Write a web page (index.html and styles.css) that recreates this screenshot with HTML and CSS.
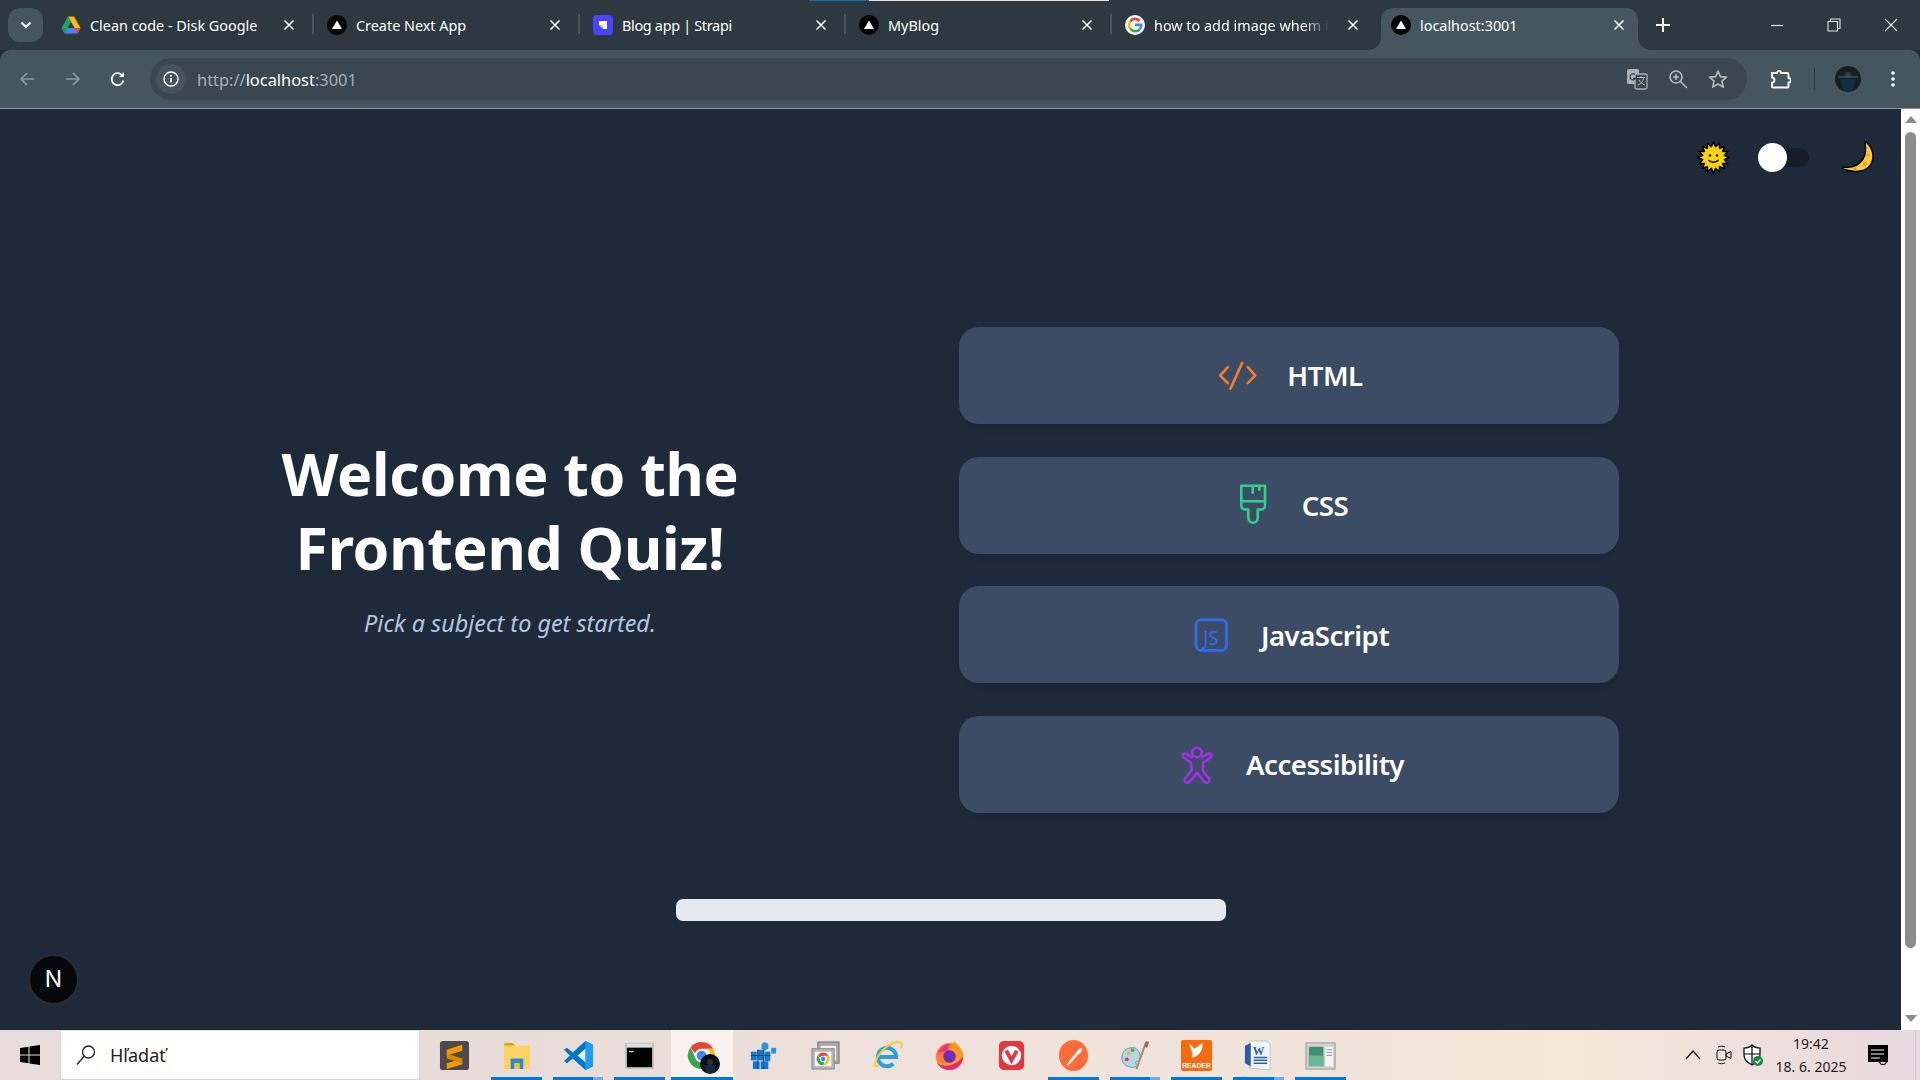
FILE: index.html
```html
<!DOCTYPE html>
<html lang="en">
<head>
<meta charset="utf-8">
<title>localhost:3001</title>
<link rel="stylesheet" href="styles.css">
</head>
<body>
<svg class="defs" width="0" height="0">
  <defs>
    <symbol id="next" viewBox="0 0 20 20"><circle cx="10" cy="10" r="10" fill="#000"/><path d="M10 5.500 15 14H5z" fill="#fff"/></symbol>
    <symbol id="x" viewBox="0 0 12 12"><path d="M1.500 1.500l9 9M10.500 1.500l-9 9" stroke="#fff" stroke-width="1.600" fill="none"/></symbol>
    <symbol id="chromelogo" viewBox="0 0 32 32">
      <path d="M16 2a14 14 0 0 1 12.100 7H16a7 7 0 0 0-6.700 5L4.700 7.700A14 14 0 0 1 16 2z" fill="#ea4335"/>
      <path d="M28.100 9A14 14 0 0 1 17 30l5.700-10A7 7 0 0 0 22 9z" fill="#fbbc04"/>
      <path d="M4.700 7.700 10.400 20a7 7 0 0 0 8 2.700L17 30A14 14 0 0 1 4.700 7.700z" fill="#34a853"/>
      <circle cx="16" cy="16" r="6.500" fill="#fff"/><circle cx="16" cy="16" r="5" fill="#4285f4"/>
    </symbol>
  </defs>
</svg>

<header class="tabstrip">
  <div class="tabs-btn"><svg width="12" height="8" viewBox="0 0 12 8"><path d="M1.500 1.500 6 6l4.500-4.500" stroke="#fff" stroke-width="2" fill="none"/></svg></div>
  <div class="tab">
    <svg class="favicon" viewBox="0 0 20 20"><path d="M7 1.500h6L19.500 13h-6z" fill="#fbbc04"/><path d="M7 1.500 .5 13l3 5.500L10 7z" fill="#1fa463"/><path d="M3.500 18.500 6.500 13h13l-3 5.500z" fill="#4285f4"/><path d="M3.500 18.500 6.500 13H.5z" fill="#0f9d58"/><path d="M16.500 18.500 19.500 13h-6z" fill="#ea4335"/></svg>
    <span class="tab-title">Clean code - Disk Google</span>
    <svg class="tab-x"><use href="#x"/></svg><i class="tab-sep"></i>
  </div>
  <div class="tab">
    <svg class="favicon"><use href="#next"/></svg>
    <span class="tab-title">Create Next App</span>
    <svg class="tab-x"><use href="#x"/></svg><i class="tab-sep"></i>
  </div>
  <div class="tab">
    <svg class="favicon" viewBox="0 0 20 20"><rect width="20" height="20" rx="4" fill="#4945ff"/><path d="M6 6h8v8h-4v-4H6z" fill="#fff"/><path d="M6 10h4v4z" fill="#c9c8ff"/></svg>
    <span class="tab-title tab-tight">Blog app | Strapi</span>
    <svg class="tab-x"><use href="#x"/></svg><i class="tab-sep"></i>
  </div>
  <div class="tab">
    <svg class="favicon"><use href="#next"/></svg>
    <span class="tab-title">MyBlog</span>
    <svg class="tab-x"><use href="#x"/></svg><i class="tab-sep"></i>
  </div>
  <div class="tab">
    <svg class="favicon" viewBox="0 0 20 20"><circle cx="10" cy="10" r="10" fill="#fff"/><g fill="none" stroke-width="2.600"><path d="M14.700 5.800A6.200 6.200 0 0 0 5.200 6.400" stroke="#ea4335"/><path d="M5.200 6.400a6.200 6.200 0 0 0 0 7.200" stroke="#fbbc04"/><path d="M5.200 13.600a6.200 6.200 0 0 0 9.800.5" stroke="#34a853"/><path d="M15 14.100a6.200 6.200 0 0 0 1.200-4.200H10" stroke="#4285f4"/></g></svg>
    <span class="tab-title tab-fade">how to add image whem it is in</span>
    <svg class="tab-x"><use href="#x"/></svg>
  </div>
  <div class="tab tab-active">
    <svg class="favicon"><use href="#next"/></svg>
    <span class="tab-title">localhost:3001</span>
    <svg class="tab-x"><use href="#x"/></svg>
  </div>
  <svg class="newtab" width="14" height="14" viewBox="0 0 14 14"><path d="M7 0v14M0 7h14" stroke="#fff" stroke-width="2"/></svg>
  <div class="winctl">
    <svg width="14" height="14" viewBox="0 0 14 14"><path d="M1 7.500h12" stroke="#dfe3e6" stroke-width="1.200"/></svg>
    <svg width="14" height="14" viewBox="0 0 14 14"><path d="M1 3.500h9.500V13H1zM3.500 3.500V1H13v9.500h-2.500" stroke="#dfe3e6" stroke-width="1.100" fill="none"/></svg>
    <svg width="14" height="14" viewBox="0 0 14 14"><path d="M1 1l12 12M13 1 1 13" stroke="#dfe3e6" stroke-width="1.100"/></svg>
  </div>
  <div class="loadline"><i class="load-blue"></i><i class="load-gray"></i></div>
</header>

<nav class="toolbar">
  <div class="navbtns">
    <svg width="16" height="16" viewBox="0 0 16 16"><path d="M15 8H2M8 2 2 8l6 6" stroke="#8d999f" stroke-width="1.700" fill="none"/></svg>
    <svg width="16" height="16" viewBox="0 0 16 16"><path d="M1 8h13M8 2l6 6-6 6" stroke="#8d999f" stroke-width="1.700" fill="none"/></svg>
    <svg width="16" height="16" viewBox="0 0 16 16"><path d="M13.500 9.500A6 6 0 1 1 12 4" stroke="#fff" stroke-width="1.800" fill="none"/><path d="M14 1v5H9z" fill="#fff"/></svg>
  </div>
  <div class="omnibox">
    <div class="info-chip"><svg width="16" height="16" viewBox="0 0 16 16"><circle cx="8" cy="8" r="7" stroke="#fff" stroke-width="1.400" fill="none"/><path d="M8 7v4.500" stroke="#fff" stroke-width="1.600"/><circle cx="8" cy="4.800" r="1" fill="#fff"/></svg></div>
    <div class="url"><span class="url-dim">http://</span><span>localhost</span><span class="url-dim">:3001</span></div>
    <div class="omni-icons">
      <svg width="22" height="22" viewBox="0 0 22 22"><rect x="1" y="1" width="12" height="15" rx="1.500" fill="#aab2b6"/><rect x="9" y="6" width="12" height="15" rx="1.500" fill="#3b4750" stroke="#aab2b6" stroke-width="1.300"/><path d="M11 9.500h8M15 8v2M12 17c3-1 5-3 5.500-7M13 12c1 2 3 4 6 5" stroke="#aab2b6" stroke-width="1" fill="none"/><path d="M9 6.500A3 3 0 1 0 9.500 10.500H7" stroke="#3b4750" stroke-width="1.300" fill="none"/></svg>
      <svg width="20" height="20" viewBox="0 0 20 20"><circle cx="8" cy="8" r="6" stroke="#b4bbbf" stroke-width="1.600" fill="none"/><path d="M12.500 12.500 19 19M5 8h6M8 5v6" stroke="#b4bbbf" stroke-width="1.600"/></svg>
      <svg width="20" height="20" viewBox="0 0 20 20"><path d="M10 2l2.400 5.600 6.100.5-4.600 4 1.400 6L10 15l-5.300 3.100 1.400-6-4.600-4 6.100-.5z" stroke="#b4bbbf" stroke-width="1.600" fill="none" stroke-linejoin="round"/></svg>
    </div>
  </div>
  <svg class="ext" width="20" height="20" viewBox="0 0 20 20"><path d="M1 4h5a2 2 0 0 1 4 0h6a1.500 1.500 0 0 1 1.500 1.500V9a2.300 2.300 0 0 1 0 4.600v3.900a1 1 0 0 1-1 1H2a1 1 0 0 1-1-1v-3.900a2.500 2.500 0 0 0 0-5z" stroke="#fff" stroke-width="1.800" fill="none"/></svg>
  <i class="tool-div"></i>
  <svg class="avatar" width="26" height="26" viewBox="0 0 26 26"><circle cx="13" cy="13" r="13" fill="#171f20"/><circle cx="13" cy="9" r="3" fill="#3a3a34"/><path d="M6 13h14l-2 12H8z" fill="#10304a"/><path d="M3 11h20" stroke="#2c6a80" stroke-width="1"/></svg>
  <svg class="dots" width="4" height="16" viewBox="0 0 4 16"><circle cx="2" cy="2" r="1.800" fill="#fff"/><circle cx="2" cy="8" r="1.800" fill="#fff"/><circle cx="2" cy="14" r="1.800" fill="#fff"/></svg>
</nav>

<div class="viewport">
  <main class="page">
    <div class="theme-row">
      <svg class="sun" width="33" height="33" viewBox="0 0 33 33">
        <path d="M32 16.500 27.300 18.600 30.800 22.400 25.600 22.600 27.500 27.500 22.600 25.600 22.400 30.800 18.600 27.300 16.500 32 14.400 27.300 10.600 30.800 10.400 25.600 5.500 27.500 7.400 22.600 2.200 22.400 5.700 18.600 1 16.500 5.700 14.400 2.200 10.600 7.400 10.400 5.500 5.500 10.400 7.400 10.600 2.200 14.400 5.700 16.500 1 18.600 5.700 22.400 2.200 22.600 7.400 27.500 5.500 25.600 10.400 30.800 10.600 27.300 14.400z" fill="#ffd400" stroke="#000" stroke-width="1.500" stroke-linejoin="round"/>
        <circle cx="13" cy="14.500" r="1.200" fill="#000"/><circle cx="20" cy="14.500" r="1.200" fill="#000"/><path d="M11.500 19c2.500 3 7.500 3 10 0" stroke="#000" stroke-width="1.300" fill="none"/>
      </svg>
      <div class="toggle"><i class="toggle-knob"></i></div>
      <svg class="moon" width="34" height="33" viewBox="0 0 34 33"><path d="M25 1c7 6 9 15 5 22S16 33 2 28c-1-1 0-2 1-2 8 1 15-2 19-8 3-5 3-11 2-16 0-1 .5-1.500 1-1z" fill="#ffc83d" stroke="#000" stroke-width="1.500" stroke-linejoin="round"/><circle cx="27" cy="14" r="1.500" fill="#e0a020"/><circle cx="24" cy="23" r="2" fill="#e0a020"/><circle cx="14" cy="28" r="1.500" fill="#e0a020"/></svg>
    </div>

    <section class="hero">
      <div class="intro">
        <h1 class="title">Welcome to the<br>Frontend Quiz!</h1>
        <p class="subtitle">Pick a subject to get started.</p>
      </div>
      <div class="subjects">
        <button class="subject">
          <svg class="subject-icon stroke-orange" viewBox="0 0 56 56"><path d="M8.800 19.200 1.200 27.500l7.600 7.700M23.200 14.800 11.500 40.800M28.800 19.200l7.400 8.300-7.400 7.700"/></svg>
          <span>HTML</span>
        </button>
        <button class="subject">
          <svg class="subject-icon stroke-green" viewBox="0 0 56 56"><path d="M7.300 8.800H31V28.500a4 4 0 0 1-4 4H23.700V41a4.700 4.700 0 0 1-9.400 0V32.500H11.300a4 4 0 0 1-4-4zM7.300 24.200H31M18.700 8.800v7M25.300 8.800v4"/></svg>
          <span>CSS</span>
        </button>
        <button class="subject">
          <svg class="subject-icon stroke-blue" viewBox="0 0 56 56"><rect x="3" y="12.900" width="30.500" height="30.500" rx="5"/><text class="js-text" x="18" y="38" text-anchor="middle">JS</text></svg>
          <span>JavaScript</span>
        </button>
        <button class="subject">
          <svg class="subject-icon stroke-purple" viewBox="0 0 56 56"><circle cx="19" cy="15.500" r="4.700"/><path d="M13.700 20.200 8.500 16.800a2.300 2.300 0 0 0-2.600 3.800L12.700 25.500 13.700 33.500 7 41.500a2.800 2.800 0 0 0 5 3L19 35.500l7 9a2.800 2.800 0 0 0 5-3L24.700 33.500 25.300 25.500 32.500 20.600a2.300 2.300 0 0 0-2.600-3.800L24 20.200"/></svg>
          <span>Accessibility</span>
        </button>
      </div>
    </section>

    <div class="bar"></div>
    <div class="next-badge"><span>N</span></div>
  </main>
  <aside class="scrollbar">
    <i class="arrow-up"></i>
    <i class="thumb"></i>
    <i class="arrow-down"></i>
  </aside>
</div>

<footer class="taskbar">
  <div class="start"><svg width="20" height="20" viewBox="0 0 20 20"><path d="M0 3l8.500-1.200V9.500H0zM9.500 1.600 20 0v9.500H9.500zM0 10.500h8.500v7.700L0 17zM9.500 10.500H20V20L9.500 18.400z" fill="#000"/></svg></div>
  <div class="search">
    <svg width="20" height="22" viewBox="0 0 20 22"><circle cx="12.500" cy="8" r="6" stroke="#222" stroke-width="1.300" fill="none"/><path d="M8 12.500 1 20.500" stroke="#222" stroke-width="1.300"/></svg>
    <span>Hľadať</span>
  </div>
  <div class="apps">
    <div class="app"><svg viewBox="0 0 32 32"><rect x="1" y="1" width="30" height="30" rx="3" fill="#4b4b4b"/><path d="M24 6 8 11v6l16-5zM24 20v6L8 31v-6z" fill="#ff9800" transform="translate(0 -1)"/><path d="M8 15l16 5v5L8 20z" fill="#e08600" transform="translate(0 -1)"/></svg></div>
    <div class="app on"><svg viewBox="0 0 32 32"><path d="M3 5a2 2 0 0 1 2-2h7l3 3h-12z" fill="#e8a200"/><rect x="3" y="6" width="27" height="24" fill="#fcd462"/><path d="M10 30V19h13v11h-4v-6h-5v6z" fill="#2a8ad4"/><rect x="14" y="24" width="5" height="6" fill="#f5c033"/></svg></div>
    <div class="app on split"><svg viewBox="0 0 32 32"><path d="M23 1 31 5v22l-8 4L10 19l-6 5-3-2 6-6-6-6 3-2 6 5z" fill="#0078c8"/><path d="M23 1 31 5v22l-8 4z" fill="#1f9cf0"/><path d="M23 9 15 16l8 7z" fill="#fff" fill-opacity=".9"/></svg></div>
    <div class="app on"><svg viewBox="0 0 32 32"><rect x="1" y="3" width="30" height="27" fill="#bfc3c4"/><rect x="3" y="8" width="26" height="20" fill="#000"/><path d="M5 12h5" stroke="#fff" stroke-width="1"/><rect x="3" y="4" width="26" height="3" fill="#dfe1e2"/></svg></div>
    <div class="app on active">
      <div class="chrome-stack">
        <svg viewBox="0 0 32 32"><use href="#chromelogo"/></svg>
        <svg class="chrome-badge" viewBox="0 0 20 20"><circle cx="10" cy="10" r="10" fill="#0b0d10"/><circle cx="10" cy="8" r="3" fill="#33302c"/><path d="M4 11h12l-2 8H6z" fill="#12293c"/></svg>
      </div>
    </div>
    <div class="app"><svg viewBox="0 0 32 32"><g fill="#1679c9"><path d="M17 2l4 2v5l-4 2-3-2V4z" fill="#2b93dd"/><rect x="3" y="12" width="6" height="9"/><rect x="10" y="10" width="6" height="11"/><rect x="17" y="12" width="6" height="10"/><rect x="24" y="8" width="5" height="6" fill="#2b93dd"/><rect x="5" y="22" width="7" height="8"/><rect x="13" y="22" width="8" height="8"/></g><path d="M3 16h20M10 10v20M16 10v20" stroke="#0a4d85" stroke-width="1"/></svg></div>
    <div class="app"><svg viewBox="0 0 32 32"><rect x="8" y="2" width="22" height="22" fill="#a8a8a8" stroke="#777"/><rect x="11" y="6" width="16" height="15" fill="#f0f0f0"/><rect x="2" y="9" width="23" height="21" fill="#b5b5b5" stroke="#888"/><rect x="5" y="12" width="17" height="15" fill="#f4f4f4"/><svg x="6" y="12" width="15" height="15" viewBox="0 0 32 32"><use href="#chromelogo"/></svg></svg></div>
    <div class="app"><svg viewBox="0 0 32 32"><path d="M7 17.500h18a9.500 9.500 0 1 0-3 7" stroke="#2e9ddb" stroke-width="4" fill="none"/><path d="M7 26C2 30 2 25 5 19 9 10 20 2 27 2c4 0 4 3 3 6" stroke="#f5cf2e" stroke-width="2" fill="none"/></svg></div>
    <div class="app"><svg viewBox="0 0 32 32"><circle cx="16" cy="17" r="14" fill="#ff7a2e"/><path d="M21 1c3 4 9 8 9 16a14 14 0 0 1-14 14c-6 0-12-4-13-10 3 3 8 4 12 2-4 0-7-3-6-6 1-4 5-4 6-6z" fill="#ff9a1f"/><path d="M4 13c3-6 8-9 13-9-3 3-3 5-2 7z" fill="#e6317f"/><circle cx="16" cy="17" r="6.500" fill="#6f2bc0"/><path d="M30 17a14 14 0 0 1-14 14c-6 0-11-3-13-8 6 6 18 5 27-6z" fill="#e32b77"/></svg></div>
    <div class="app"><svg viewBox="0 0 32 32"><rect x="3" y="1" width="26" height="30" rx="5" fill="#e5373f"/><circle cx="16" cy="16" r="10" fill="#fff"/><path d="M10.500 11 16 21l5.500-10" stroke="#e5373f" stroke-width="4" fill="none"/></svg></div>
    <div class="app on"><svg viewBox="0 0 32 32"><ellipse cx="16" cy="16" rx="15" ry="16" fill="#ff6c37"/><path d="M10 24 17 15l5-6 3-1-1 4-5 5-7 8z" fill="#fff"/><path d="M9 25l2 1" stroke="#fff" stroke-width="1.500"/></svg></div>
    <div class="app on split"><svg viewBox="0 0 32 32"><path d="M15 8C7 7 1 12 2 20c1 6 7 9 13 8 3-1 2-3 1-5 3-1 6-3 5-7-1-4-3-7-6-8z" fill="#b4d6ea" stroke="#6d96b0"/><circle cx="9" cy="14" r="2" fill="#e8b43a"/><circle cx="13" cy="10.500" r="2" fill="#56a84c"/><circle cx="7" cy="20" r="2" fill="#d1473e"/><path d="M27 2 17 30" stroke="#b08a5a" stroke-width="2"/><path d="M27 1l3 1-2 6-3-1z" fill="#8d6e46"/></svg></div>
    <div class="app on"><svg viewBox="0 0 32 32"><rect x="0" y="0" width="32" height="32" rx="2" fill="#f96a0e"/><path d="M8 3l6 6 8-6c1 5-1 9-4 12-2 2-4 3-7 3l1-4z" fill="#fff"/><text class="reader-text" x="16" y="28.500" text-anchor="middle">READER</text></svg></div>
    <div class="app on split"><svg viewBox="0 0 32 32"><path d="M7 1h18l3 3v27l-21-2z" fill="#f2f4f7" stroke="#bcc4ce"/><path d="M2 6l6-3v24l-6-3z" fill="#2a5caa"/><text class="word-text" x="10" y="15">W</text><path d="M11 18h14M11 21h14M11 24h14" stroke="#2a5caa" stroke-width="1.600"/></svg></div>
    <div class="app on"><svg viewBox="0 0 32 32"><rect x="1" y="3" width="30" height="27" fill="#cfd3d3" stroke="#999"/><rect x="4" y="7" width="15" height="20" fill="#3f8f76"/><path d="M4 16h15v11H4z" fill="#6ab79b"/><rect x="21" y="7" width="8" height="20" fill="#f4f4f4"/><path d="M22 10h6M22 13h6M22 16h6" stroke="#9a9a9a"/></svg></div>
  </div>
  <div class="tray">
    <svg class="tray-chevron" width="16" height="10" viewBox="0 0 16 10"><path d="M1 9l7-8 7 8" stroke="#111" stroke-width="1.200" fill="none"/></svg>
    <svg class="tray-cam" width="16" height="20" viewBox="0 0 16 20"><rect x="1" y="5" width="9" height="10" rx="2" stroke="#111" fill="none"/><path d="M10 9l5-2.500v7L10 11zM2 2c2-1 5-1 7 0M2 18c2 1 5 1 7 0" stroke="#111" fill="none"/></svg>
    <svg class="tray-shield" width="20" height="22" viewBox="0 0 20 22"><path d="M9 1c2 2 5 3 8 3v7c0 5-4 8-8 10-4-2-8-5-8-10V4c3 0 6-1 8-3z" fill="#fff" stroke="#000" stroke-width="1.200"/><path d="M9 1v20M1 10h16" stroke="#000" stroke-width="1.200"/><circle cx="15" cy="17" r="5" fill="#16883e"/><path d="M12.500 17l2 2 3-3.500" stroke="#fff" stroke-width="1.300" fill="none"/></svg>
    <div class="clock"><span>19:42</span><span>18. 6. 2025</span></div>
    <svg class="notif" width="22" height="22" viewBox="0 0 22 22"><path d="M1 1h20v17h-20z" fill="#000"/><path d="M4 6h13M4 10h13M4 14h9" stroke="#fff" stroke-width="1.200"/><circle cx="16" cy="17" r="3.500" fill="none" stroke="#000" stroke-width="1.100"/></svg>
  </div>
</footer>
</body>
</html>
```

FILE: styles.css
```css
* { box-sizing: border-box; }
html, body { margin: 0; height: 100%; }
body {
  display: flex;
  flex-direction: column;
  height: 100vh;
  overflow: hidden;
  font-family: "Noto Sans", "Open Sans", sans-serif;
  background: #1e2a3a;
}
i { display: block; font-style: normal; }
.defs { position: absolute; }

/* browser tab strip */
.tabstrip {
  position: relative;
  display: flex;
  align-items: flex-end;
  height: 50px;
  flex: none;
  padding-left: 8px;
  background: #2d3840;
}
.tabs-btn {
  width: 35px;
  height: 34px;
  margin: 0 3px 8px 0;
  border-radius: 12px;
  background: #46565f;
  display: flex;
  align-items: center;
  justify-content: center;
}
.tab {
  position: relative;
  display: flex;
  align-items: center;
  width: 266px;
  height: 42px;
  padding: 0 0 8px 15px;
  color: #fff;
  font-size: 14.4px;
}
.favicon { width: 20px; height: 20px; flex: none; }
.tab-title {
  flex: 1;
  min-width: 0;
  margin-left: 9px;
  white-space: nowrap;
  overflow: hidden;
}
.tab-tight { letter-spacing: -0.3px; }
.tab-fade {
  margin-right: 10px;
  -webkit-mask-image: linear-gradient(90deg, #000 85%, transparent 100%);
  mask-image: linear-gradient(90deg, #000 85%, transparent 100%);
}
.tab-x { width: 12px; height: 12px; flex: none; margin: 0 17px 0 8px; }
.tab-sep {
  width: 2px;
  height: 20px;
  flex: none;
  background: #46565f;
  margin-right: -1px;
  position: absolute;
  right: -1px;
  top: 6px;
}
.tab-active {
  z-index: 1;
}
.tab-active::before {
  content: "";
  position: absolute;
  z-index: -1;
  top: 0;
  bottom: 0;
  left: 5px;
  right: 4px;
  background: #46565f;
  border-radius: 12px 12px 0 0;
}
.tab-active::after {
  content: "";
  position: absolute;
  z-index: -1;
  bottom: 0;
  left: -7px;
  right: -8px;
  height: 12px;
  background:
    radial-gradient(circle at 0 0, #2d3840 11.5px, #46565f 12px) left bottom / 12px 12px no-repeat,
    radial-gradient(circle at 100% 0, #2d3840 11.5px, #46565f 12px) right bottom / 12px 12px no-repeat;
}
.newtab { margin: 0 0 18px 14px; flex: none; }
.winctl {
  margin-left: auto;
  margin-bottom: 18px;
  display: flex;
  gap: 43px;
  padding-right: 22px;
}
.loadline {
  position: absolute;
  top: 0;
  left: 809px;
  display: flex;
  height: 1px;
}
.load-blue { width: 60px; background: #0a6ebd; }
.load-gray { width: 240px; background: #e0e0e0; }

/* toolbar */
.toolbar {
  display: flex;
  align-items: center;
  height: 59px;
  flex: none;
  padding: 0 0 1px 0;
  border-bottom: 1px solid #8a979e;
  border-radius: 10px 10px 0 0;
  background: #46565f;
  position: relative;
}
.navbtns {
  display: flex;
  gap: 29.5px;
  width: 150px;
  padding-left: 19px;
}
.omnibox {
  display: flex;
  align-items: center;
  width: 1597px;
  height: 42px;
  border-radius: 21px;
  background: #3a4650;
}
.info-chip {
  width: 30px;
  height: 30px;
  margin-left: 6px;
  border-radius: 50%;
  background: #46535c;
  display: flex;
  align-items: center;
  justify-content: center;
}
.url {
  margin: 2px 0 0 11px;
  color: #fff;
  font-size: 16.4px;
}
.url-dim { color: #a5afb5; }
.omni-icons {
  margin-left: auto;
  display: flex;
  align-items: center;
  gap: 20px;
  padding-right: 19px;
}
.ext { margin-left: 24px; flex: none; }
.tool-div { width: 1px; height: 22px; background: #2e3a42; margin-left: 23px; flex: none; }
.avatar { margin-left: 20px; flex: none; }
.dots { margin-left: 30px; flex: none; }

/* page */
.viewport {
  flex: 1;
  display: flex;
  min-height: 0;
}
.page {
  position: relative;
  flex: 1;
  min-width: 0;
  padding-top: 31.5px;
  background: #1e2a3a;
  color: #fff;
}
.theme-row {
  display: flex;
  justify-content: flex-end;
  align-items: center;
  height: 33px;
  padding-right: 26px;
}
.sun { flex: none; }
.toggle {
  position: relative;
  width: 51px;
  height: 19px;
  margin: 0 32px 0 28px;
  border-radius: 10px;
  background: #141d28;
}
.toggle-knob {
  position: absolute;
  left: 0;
  top: -5px;
  width: 29px;
  height: 29px;
  border-radius: 50%;
  background: #fff;
}
.hero {
  display: grid;
  grid-template-columns: 816px 660px;
  column-gap: 41px;
  margin-top: 153.5px;
  padding-left: 102px;
}
.intro { text-align: center; padding-top: 110px; }
.title {
  margin: 0;
  font-size: 59px;
  line-height: 73.5px;
  font-weight: 700;
  letter-spacing: -0.3px;
}
.subtitle {
  margin: 22.5px 0 0;
  font-size: 23.4px;
  line-height: 32px;
  font-style: italic;
  color: #b3c6e0;
}
.subjects {
  display: flex;
  flex-direction: column;
  gap: 32.7px;
}
.subject {
  display: grid;
  grid-template-columns: 1fr auto 1fr;
  align-items: center;
  height: 97px;
  padding: 0 0 0 72px;
  border: 0;
  border-radius: 20px;
  background: #3c4c65;
  box-shadow: 0 10px 15px -3px rgba(0, 0, 0, .1);
  color: #fff;
  font: 600 27.600px/1 "Noto Sans", "Open Sans", sans-serif;
  letter-spacing: -0.5px;
}
.subject span { padding-top: 1px; }
.subject-icon {
  width: 56px;
  height: 56px;
  justify-self: end;
  margin-right: 12px;
  fill: none;
  stroke-width: 2.6;
  stroke-linecap: round;
  stroke-linejoin: round;
}
.stroke-orange { stroke: #f97a2c; }
.stroke-green { stroke: #2fd08a; }
.stroke-blue { stroke: #2f6bf0; }
.stroke-purple { stroke: #a230ea; }
.js-text {
  font: 400 19px "Noto Sans", sans-serif;
  letter-spacing: 0;
  fill: #2f6bf0;
  stroke: none;
}
.bar {
  width: 550px;
  height: 22px;
  margin: 86px auto 0;
  border-radius: 7px;
  background: #e6eaee;
}
.next-badge {
  position: absolute;
  left: 28px;
  bottom: 25.5px;
  width: 51px;
  height: 51px;
  border-radius: 50%;
  background: #06080b;
  border: 2px solid #2a2c30;
  display: flex;
  align-items: center;
  justify-content: center;
  font: 400 23px "Inter", sans-serif;
  color: #fff;
}

/* scrollbar */
.scrollbar {
  width: 19px;
  flex: none;
  display: flex;
  flex-direction: column;
  align-items: center;
  background: #fff;
}
.arrow-up, .arrow-down {
  width: 0;
  height: 0;
  border-left: 6.500px solid transparent;
  border-right: 6.500px solid transparent;
}
.arrow-up { margin-top: 7px; border-bottom: 7px solid #8c8c8c; }
.arrow-down { margin-top: 67px; border-top: 7px solid #8c8c8c; }
.thumb {
  width: 11px;
  height: 816px;
  margin-top: 9px;
  border-radius: 6px;
  background: #8c8c8c;
}

/* taskbar */
.taskbar {
  display: flex;
  align-items: stretch;
  height: 50px;
  flex: none;
  background: linear-gradient(90deg, #e9dcdc 0%, #e8dcd8 25%, #efe2dc 50%, #f0e4da 70%, #f4e8d9 82%, #ebdddd 95%, #e6d9df 100%);
}
.start {
  width: 60px;
  flex: none;
  display: flex;
  align-items: center;
  justify-content: center;
}
.search {
  width: 360px;
  flex: none;
  margin-top: 1px;
  display: flex;
  align-items: center;
  gap: 14px;
  padding-left: 15px;
  background: #fff;
  border: 1px solid #d4d2d2;
  border-top: 0;
  font-size: 18px;
  color: #222;
}
.apps {
  display: flex;
  margin-left: 3.3px;
}
.app {
  position: relative;
  width: 61.9px;
  display: flex;
  align-items: center;
  justify-content: center;
}
.app > svg, .chrome-stack { width: 31px; height: 31px; }
.app.on::after {
  content: "";
  position: absolute;
  left: 5.500px;
  right: 5.500px;
  bottom: 0;
  height: 3px;
  background: #0078d4;
}
.app.split::after {
  background: linear-gradient(90deg, #0078d4 80%, #6cb0e6 80%);
}
.app.active { background: #f8f1ee; }
.app.active::after { left: 0; right: 0; }
.chrome-stack { position: relative; }
.chrome-stack > svg { width: 31px; height: 31px; display: block; }
.chrome-stack > .chrome-badge {
  position: absolute;
  right: -3px;
  bottom: -3px;
  width: 20px;
  height: 20px;
}
.reader-text { font: 700 7px "Liberation Sans", sans-serif; fill: #fff; }
.word-text { font: 700 12px "Liberation Serif", serif; fill: #2a5caa; }
.tray {
  margin-left: auto;
  margin-right: 4px;
  display: flex;
  align-items: center;
  padding-right: 26px;
  border-right: 1px solid #cfc6cb;
}
.tray-cam { margin-left: 15px; }
.tray-shield { margin-left: 11px; }
.clock {
  display: flex;
  flex-direction: column;
  align-items: center;
  width: 76px;
  margin-left: 10px;
  gap: 5px;
  font-size: 14px;
  line-height: 18px;
  color: #222;
  white-space: nowrap;
}
.notif { margin-left: 18px; }
```
